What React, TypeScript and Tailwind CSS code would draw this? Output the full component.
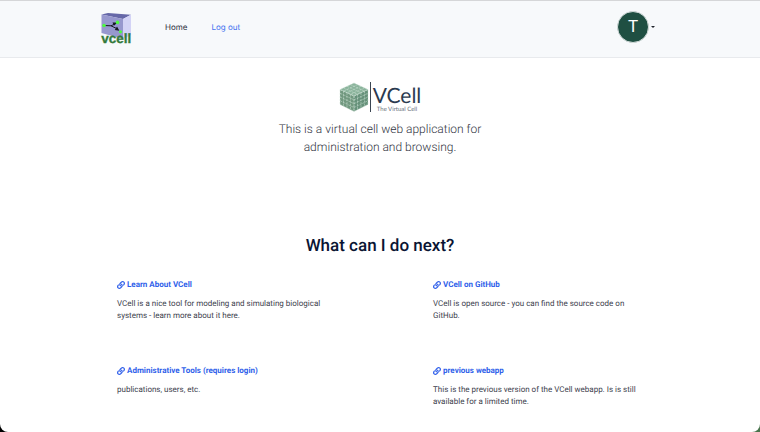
import { FaLink } from "react-icons/fa";

const links = [
  { title: "Learn About VCell", body: "VCell is a nice tool for modeling and simulating biological systems - learn more about it here." },
  { title: "VCell on GitHub", body: "VCell is open source - you can find the source code on GitHub." },
  { title: "Administrative Tools (requires login)", body: "publications, users, etc." },
  { title: "previous webapp", body: "This is the previous version of the VCell webapp. Is is still available for a limited time." },
];

function NavLogo() {
  return (
    <svg viewBox="1 0 32 32" className="size-8 overflow-visible" role="img" aria-label="vcell">
      <path d="M1.5 3.5 8 2 31 3.8 23 8Z" fill="#6668a8" />
      <path d="M1.5 3.5 23 8v20L1.5 22Z" fill="#9798ce" />
      <path d="M23 8 31 3.8V24l-8 4Z" fill="#d3d3f6" />
      <path d="M4 14.5 11 14.8l6-2.8M11 14.8l7 3.4" fill="none" stroke="#171725" strokeWidth="1" />
      <path d="m12.5 11.6 4.5 0-3 3.2ZM14.8 19l2.2-3.6 2.4 4.4Z" fill="#171725" />
      <circle cx="4" cy="14.5" r="1.8" fill="#4dfa43" />
      <circle cx="17.5" cy="11.4" r="1.8" fill="#4dfa43" />
      <circle cx="20.5" cy="20.8" r="1.6" fill="#4dfa43" />
      <text x="1.2" y="32" fontFamily="Liberation Sans, sans-serif" fontWeight="700" fontSize="13.5" fill="#347a3b" stroke="#347a3b" strokeWidth=".3">vcell</text>
    </svg>
  );
}

const steps = [0, 1, 2, 3, 4];

function Cube() {
  return (
    <svg viewBox="0 0 30 30" className="h-[30px] w-[30px]" aria-hidden="true">
      <path d="M15 1 29 7.5 15 14 1 7.5Z" fill="#8ab39b" />
      <path d="M1 7.5 15 14v15.5L1 22.5Z" fill="#71987f" />
      <path d="M29 7.5 15 14v15.5l14-7Z" fill="#66917a" />
      <g stroke="#cfe2d6" strokeWidth=".5" fill="none" strokeDasharray="2.2 .9">
        {steps.map((i) => (
          <g key={i}>
            <path d={`M${1 + i * 3.5} ${7.5 + i * 1.625}v15`} />
            <path d={`M${29 - i * 3.5} ${7.5 + i * 1.625}v15`} />
            <path d={`M1 ${7.5 + i * 3.75}L15 ${14 + i * 3.85}L29 ${7.5 + i * 3.75}`} />
            <path d={`M${1 + i * 3.5} ${7.5 - i * 1.625}l14 6.5`} />
            <path d={`M${29 - i * 3.5} ${7.5 - i * 1.625}l-14 6.5`} />
          </g>
        ))}
      </g>
    </svg>
  );
}

export default function App() {
  return (
    <div className="min-h-screen bg-linear-to-r from-black to-[#49754d] font-[Roboto,sans-serif] [text-rendering:geometricPrecision]">
      <div className="min-h-screen rounded-b-lg border-t border-[#d5d6d8] bg-white">
        <header className="border-b border-[#e8eaed] bg-[#f7f9fb]">
          <div className="mx-auto flex h-14 w-full max-w-[558px] items-center pb-1">
            <a href="#home"><NavLogo /></a>
            <nav className="ml-8 flex flex-1 gap-6 font-[Inter,sans-serif] text-[8px] leading-3">
              <a href="#home" className="text-[#2b2f3b]">Home</a>
              <a href="#logout" className="text-[#4372f0]">Log out</a>
            </nav>
            <button type="button" aria-label="Account menu" className="mr-1 flex items-center gap-0.5">
              <span className="flex size-8 items-center justify-center rounded-full border border-[#d4dcdb] bg-[#1f4f42] text-[17px] text-white">T</span>
              <svg viewBox="0 0 4 2" className="h-0.5 w-1" aria-hidden="true"><path d="M0 0h4L2 2Z" fill="#20242d" /></svg>
            </button>
          </div>
        </header>
        <main className="mx-auto w-full max-w-[558px] px-4 pb-5">
          <section className="flex flex-col items-center pt-6">
            <div className="flex h-[30px] items-center">
              <Cube />
              <div className="ml-px h-[30px] border-l border-[#3b4552] pl-0.5 text-center text-[#2b3a50]">
                <div className="pt-0.5 font-[Lato,sans-serif] text-[21px] leading-6">VCell</div>
                <div className="font-[Lato,sans-serif] text-[6px] leading-1 text-[#67717d]">The Virtual Cell</div>
              </div>
            </div>
            <p className="mt-2 w-56 text-center text-[12px] leading-[18px] font-light text-[#30333e]">
              This is a virtual cell web application for administration and browsing.
            </p>
          </section>
          <h2 className="mt-20 text-center text-[17px] leading-5 font-medium text-[#0a1433]">What can I do next?</h2>
          <div className="mt-[23px] grid grid-cols-[210px_210px] justify-between gap-y-[43px]">
            {links.map((link) => (
              <article key={link.title}>
                <h3 className="text-[8px] leading-3 font-bold text-[#2f5fea]">
                  <a href="#details" className="flex items-center gap-0.5 whitespace-nowrap"><FaLink className="size-2" aria-hidden="true" />{link.title}</a>
                </h3>
                <p className="mt-[7px] text-[8px] leading-3 text-[#3d414d]">{link.body}</p>
              </article>
            ))}
          </div>
        </main>
      </div>
    </div>
  );
}
